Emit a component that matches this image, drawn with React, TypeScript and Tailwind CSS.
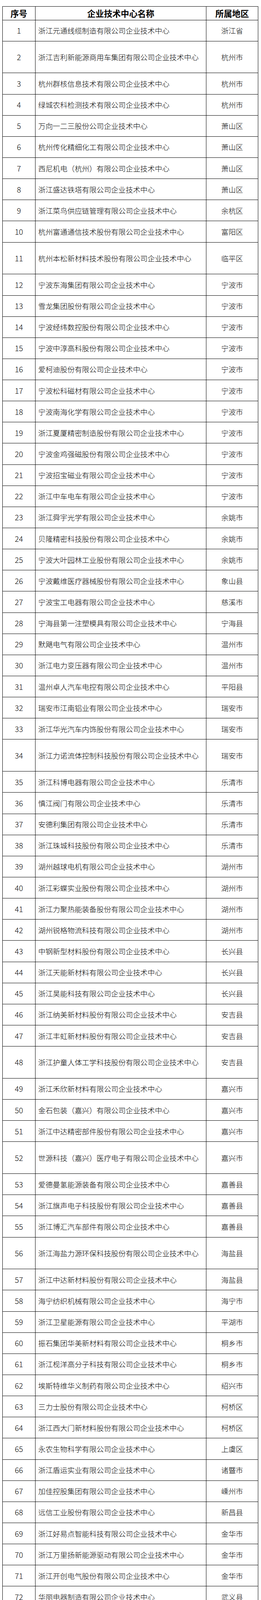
type Row = [string, string, number?, boolean?];

// h: 0 = normal row, 1 = tall, 2 = short, other = explicit px
const rows: Row[] = [
  ["浙江元通线缆制造有限公司企业技术中心", "浙江省"],
  ["浙江吉利新能源商用车集团有限公司企业技术中心", "杭州市", 1],
  ["杭州群核信息技术有限公司企业技术中心", "杭州市"],
  ["绿城农科检测技术有限公司企业技术中心", "杭州市"],
  ["万向一二三股份公司企业技术中心", "萧山区"],
  ["杭州传化精细化工有限公司企业技术中心", "萧山区"],
  ["西尼机电（杭州）有限公司企业技术中心", "萧山区"],
  ["浙江盛达铁塔有限公司企业技术中心", "萧山区"],
  ["浙江菜鸟供应链管理有限公司企业技术中心", "余杭区"],
  ["杭州富通通信技术股份有限公司企业技术中心", "富阳区"],
  ["杭州本松新材料技术股份有限公司企业技术中心", "临平区", 1],
  ["宁波东海集团有限公司企业技术中心", "宁波市"],
  ["雪龙集团股份有限公司企业技术中心", "宁波市"],
  ["宁波经纬数控股份有限公司企业技术中心", "宁波市"],
  ["宁波中淳高科股份有限公司企业技术中心", "宁波市"],
  ["爱柯迪股份有限公司企业技术中心", "宁波市"],
  ["宁波松科磁材有限公司企业技术中心", "宁波市"],
  ["宁波南海化学有限公司企业技术中心", "宁波市"],
  ["浙江夏厦精密制造股份有限公司企业技术中心", "宁波市"],
  ["宁波金鸡强磁股份有限公司企业技术中心", "宁波市"],
  ["宁波招宝磁业有限公司企业技术中心", "宁波市"],
  ["浙江中车电车有限公司企业技术中心", "宁波市"],
  ["浙江舜宇光学有限公司企业技术中心", "余姚市"],
  ["贝隆精密科技股份有限公司企业技术中心", "余姚市"],
  ["宁波大叶园林工业股份有限公司企业技术中心", "余姚市"],
  ["宁波戴维医疗器械股份有限公司企业技术中心", "象山县"],
  ["宁波宝工电器有限公司企业技术中心", "慈溪市"],
  ["宁海县第一注塑模具有限公司企业技术中心", "宁海县"],
  ["默飓电气有限公司企业技术中心", "温州市"],
  ["浙江电力变压器有限公司企业技术中心", "温州市"],
  ["温州卓人汽车电控有限公司企业技术中心", "平阳县"],
  ["瑞安市江南铝业有限公司企业技术中心", "瑞安市"],
  ["浙江华光汽车内饰股份有限公司企业技术中心", "瑞安市"],
  ["浙江力诺流体控制科技股份有限公司企业技术中心", "瑞安市", 1],
  ["浙江科博电器有限公司企业技术中心", "乐清市"],
  ["慎江阀门有限公司企业技术中心", "乐清市"],
  ["安德利集团有限公司企业技术中心", "乐清市"],
  ["浙江珠城科技股份有限公司企业技术中心", "乐清市"],
  ["湖州越球电机有限公司企业技术中心", "湖州市"],
  ["浙江彩蝶实业股份有限公司企业技术中心", "湖州市"],
  ["浙江力聚热能装备股份有限公司企业技术中心", "湖州市"],
  ["湖州锐格物流科技有限公司企业技术中心", "湖州市"],
  ["中钢新型材料股份有限公司企业技术中心", "长兴县"],
  ["浙江天能新材料有限公司企业技术中心", "长兴县"],
  ["浙江昊能科技有限公司企业技术中心", "长兴县"],
  ["浙江纳美新材料股份有限公司企业技术中心", "安吉县"],
  ["浙江丰虹新材料股份有限公司企业技术中心", "安吉县"],
  ["浙江护童人体工学科技股份有限公司企业技术中心", "安吉县", 1],
  ["浙江禾欣新材料有限公司企业技术中心", "嘉兴市"],
  ["金石包装（嘉兴）有限公司企业技术中心", "嘉兴市"],
  ["浙江中达精密部件股份有限公司企业技术中心", "嘉兴市"],
  ["世源科技（嘉兴）医疗电子有限公司企业技术中心", "嘉兴市", 1],
  ["爱德曼氢能源装备有限公司企业技术中心", "嘉善县"],
  ["浙江旗声电子科技股份有限公司企业技术中心", "嘉善县"],
  ["浙江博汇汽车部件有限公司企业技术中心", "嘉善县"],
  ["浙江海盐力源环保科技股份有限公司企业技术中心", "海盐县", 1],
  ["浙江中达新材料股份有限公司企业技术中心", "海盐县"],
  ["海宁纺织机械有限公司企业技术中心", "海宁市"],
  ["浙江卫星能源有限公司企业技术中心", "平湖市"],
  ["振石集团华美新材料有限公司企业技术中心", "桐乡市"],
  ["浙江枧洋高分子科技有限公司企业技术中心", "桐乡市"],
  ["埃斯特维华义制药有限公司企业技术中心", "绍兴市"],
  ["三力士股份有限公司企业技术中心", "柯桥区"],
  ["浙江西大门新材料股份有限公司企业技术中心", "柯桥区"],
  ["永农生物科学有限公司企业技术中心", "上虞区"],
  ["浙江盾运实业有限公司企业技术中心", "诸暨市"],
  ["加佳控股集团有限公司企业技术中心", "嵊州市"],
  ["远信工业股份有限公司企业技术中心", "新昌县"],
  ["浙江好易点智能科技有限公司企业技术中心", "金华市"],
  ["浙江万里扬新能源驱动有限公司企业技术中心", "金华市"],
  ["浙江开创电气股份有限公司企业技术中心", "金华市"],
  ["华丽电器制造有限公司企业技术中心", "武义县"],
  ["浙江花园生物高科股份有限公司企业技术中心", "东阳市"],
  ["浙江中宁硅业有限公司企业技术中心", "衢州市"],
  ["浙江喜尔康智能家居股份有限公司企业技术中心", "衢州市", 1],
  ["华邦古楼新材料有限公司企业技术中心", "龙游县"],
  ["舟山惠生海洋工程有限公司企业技术中心", "岱山县"],
  ["浙江沃德尔科技集团股份有限公司企业技术中心", "台州市", 1],
  ["浙江丰立智能科技股份有限公司企业技术中心", "台州市"],
  ["新天力科技股份有限公司企业技术中心", "台州市"],
  ["浙江鑫鼎塑业股份有限公司企业技术中心", "台州市"],
  ["浙江万得凯流体设备科技股份有限公司企业技术中心", "玉环市", 1],
  ["三门三友科技股份有限公司企业技术中心", "三门县"],
  ["浙江恒康药业股份有限公司企业技术中心", "三门县"],
  ["浙江明丰实业股份有限公司企业技术中心", "天台县"],
  ["浙江百纳橡塑设备有限公司企业技术中心", "仙居县"],
  ["浙江丰安生物制药有限公司企业技术中心", "仙居县"],
  ["浙江海天机械有限公司企业技术中心", "温岭市"],
  ["浙江四兄绳业有限公司企业技术中心", "临海市"],
  ["浙江荣鑫智能仪表股份有限公司企业技术中心", "临海市"],
  ["恒大电气有限公司企业技术中心", "丽水市"],
  ["青山钢管有限公司企业技术中心", "青田县"],
  ["浙江精瑞工模具有限公司企业技术中心", "缙云县"],
  ["宇恒电池股份有限公司企业技术中心", "遂昌县"],
  ["浙江永上特材有限公司企业技术中心", "遂昌县"],
  ["中铁二十四局集团浙江工程有限公司企业技术中心", "浙江省", 3],
  ["浙江省武林建筑装饰集团有限公司企业技术中心", "浙江省"],
  ["浙江省正邦水电建设有限公司企业技术中心", "浙江省"],
  ["浙江交工金筑交通建设有限公司企业技术中心", "浙江省"],
  ["杭州市交通工程集团有限公司企业技术中心", "杭州市"],
  ["杭州中宙建工集团有限公司企业技术中心", "杭州市"],
  ["浙江东欣建设集团有限公司企业技术中心", "杭州市"],
  ["浙江振丰建设有限公司企业技术中心", "杭州市", 2],
  ["浙江沧海建设有限公司企业技术中心", "宁波市", 2],
  ["今天建设有限公司企业技术中心", "宁波市"],
  ["浙江正立高科建设有限公司企业技术中心", "温州市"],
  ["浙江佳成和合建设有限公司企业技术中心", "湖州市"],
  ["浙江嘉兴福达建设股份有限公司企业技术中心", "嘉兴市", 2],
  ["五洋建设集团股份有限公司企业技术中心", "绍兴市", 2],
  ["和海建设科技集团有限公司企业技术中心", "舟山市"],
  ["浙江万里建设工程有限公司企业技术中心", "台州市"],
  ["浙江金圣建设集团有限公司企业技术中心", "丽水市", 4, true],
];

const heights = ["h-[54.15px]", "h-[81.8px]", "h-[29px]", "h-[91px]", "h-[56.4px]"];

export default function App() {
  return (
    <div className="bg-white pt-[16px] pb-[9px] font-['Noto_Sans_CJK_SC',sans-serif] text-black">
      <div className="ml-[6px] w-[656px] border-l border-t border-black">
        <div className="grid grid-cols-[84px_438px_133px] h-[34.5px] border-b border-black text-[21.5px] font-bold leading-none">
          <div className="flex items-center justify-center border-r border-black">序号</div>
          <div className="flex items-center justify-center border-r border-black">企业技术中心名称</div>
          <div className="flex items-center justify-center border-r border-black">所属地区</div>
        </div>
        {rows.map(([name, region, h = 0, topRegion], i) => (
          <div
            key={i}
            className={"grid grid-cols-[84px_438px_133px] border-b border-black text-[18.7px] font-light leading-[28px] " + heights[h]}
          >
            <div className="flex items-center justify-center border-r border-black text-[19.5px]">{i + 1}</div>
            <div className="flex items-center border-r border-black pl-[7px] pr-[2px]">{name}</div>
            <div
              className={
                "flex justify-center border-r border-black " +
                (topRegion ? "items-start pt-[2px]" : "items-center")
              }
            >
              {region}
            </div>
          </div>
        ))}
      </div>
    </div>
  );
}
